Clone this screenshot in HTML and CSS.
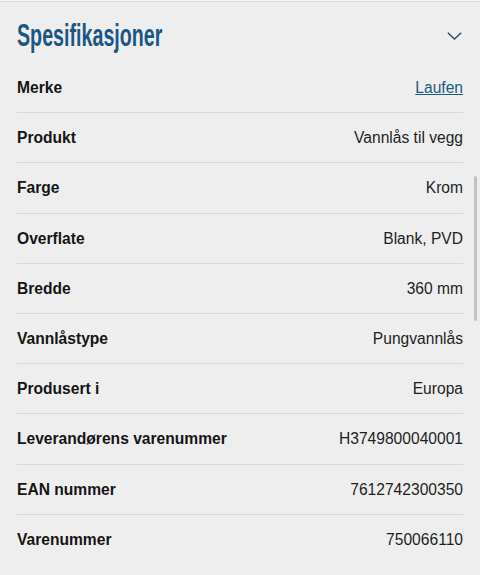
FILE: index.html
```html
<!DOCTYPE html>
<html lang="no">
<head>
<meta charset="utf-8">
<link rel="stylesheet" href="styles.css">
</head>
<body>
<div class="page">
  <section class="specs">
    <header class="specs-head">
      <h2 class="specs-title">Spesifikasjoner</h2>
      <svg class="chevron" width="15" height="8" viewBox="0 0 15 8"><polyline points="0.8,0.8 7.5,7 14.2,0.8" fill="none" stroke="#1f4f6e" stroke-width="1.4"/></svg>
    </header>
    <dl class="spec-list">
      <div class="spec-row"><dt>Merke</dt><dd><a class="spec-link" href="#">Laufen</a></dd></div>
      <div class="spec-row"><dt>Produkt</dt><dd>Vannlås til vegg</dd></div>
      <div class="spec-row"><dt>Farge</dt><dd>Krom</dd></div>
      <div class="spec-row"><dt>Overflate</dt><dd>Blank, PVD</dd></div>
      <div class="spec-row"><dt>Bredde</dt><dd>360 mm</dd></div>
      <div class="spec-row"><dt>Vannlåstype</dt><dd>Pungvannlås</dd></div>
      <div class="spec-row"><dt>Produsert i</dt><dd>Europa</dd></div>
      <div class="spec-row"><dt>Leverandørens varenummer</dt><dd>H3749800040001</dd></div>
      <div class="spec-row"><dt>EAN nummer</dt><dd>7612742300350</dd></div>
      <div class="spec-row last"><dt>Varenummer</dt><dd>750066110</dd></div>
    </dl>
  </section>
  <div class="scrollbar"></div>
</div>
</body>
</html>
```
FILE: styles.css
```css
html, body {
  margin: 0;
  padding: 0;
  background: #eeeeee;
}
body {
  font-family: "Liberation Sans", Arial, sans-serif;
  color: #1a1a1a;
  width: 480px;
  height: 575px;
  overflow: hidden;
}
.page {
  position: relative;
  border-top: 1px solid #f7f7f7;
  box-shadow: inset 0 1px 0 #dcdcdc;
  height: 574px;
}
.specs {
  padding: 2px 17px 0 17px;
}
.specs-head {
  display: flex;
  align-items: center;
  justify-content: space-between;
  height: 60px;
}
.specs-title {
  margin: 0;
  font-family: "Liberation Sans", Arial, sans-serif;
  font-weight: bold;
  font-size: 30.5px;
  line-height: 1;
  color: #1b5784;
  transform: scaleX(0.645);
  transform-origin: left center;
  white-space: nowrap;
  position: relative;
  top: 2px;
}
.chevron {
  position: relative;
  top: 3px;
  margin-right: 1px;
}
.spec-list {
  margin: 0;
}
.spec-row {
  display: flex;
  align-items: center;
  justify-content: space-between;
  height: 49.2px;
  padding-top: 1px;
  box-sizing: border-box;
  height: 50.2px;
  border-bottom: 1px solid #d8d8d8;
  font-size: 15.6px;
}
.spec-row.last {
  border-bottom: none;
}
.spec-row dt {
  font-weight: bold;
  color: #151515;
}
.spec-row dd {
  margin: 0;
  color: #1e1e1e;
}
.spec-link {
  color: #1c5a82;
  text-decoration: underline;
}
.scrollbar {
  position: absolute;
  left: 474px;
  top: 175px;
  width: 3px;
  height: 145px;
  border-radius: 2px;
  background: #c2c2c2;
}
```
